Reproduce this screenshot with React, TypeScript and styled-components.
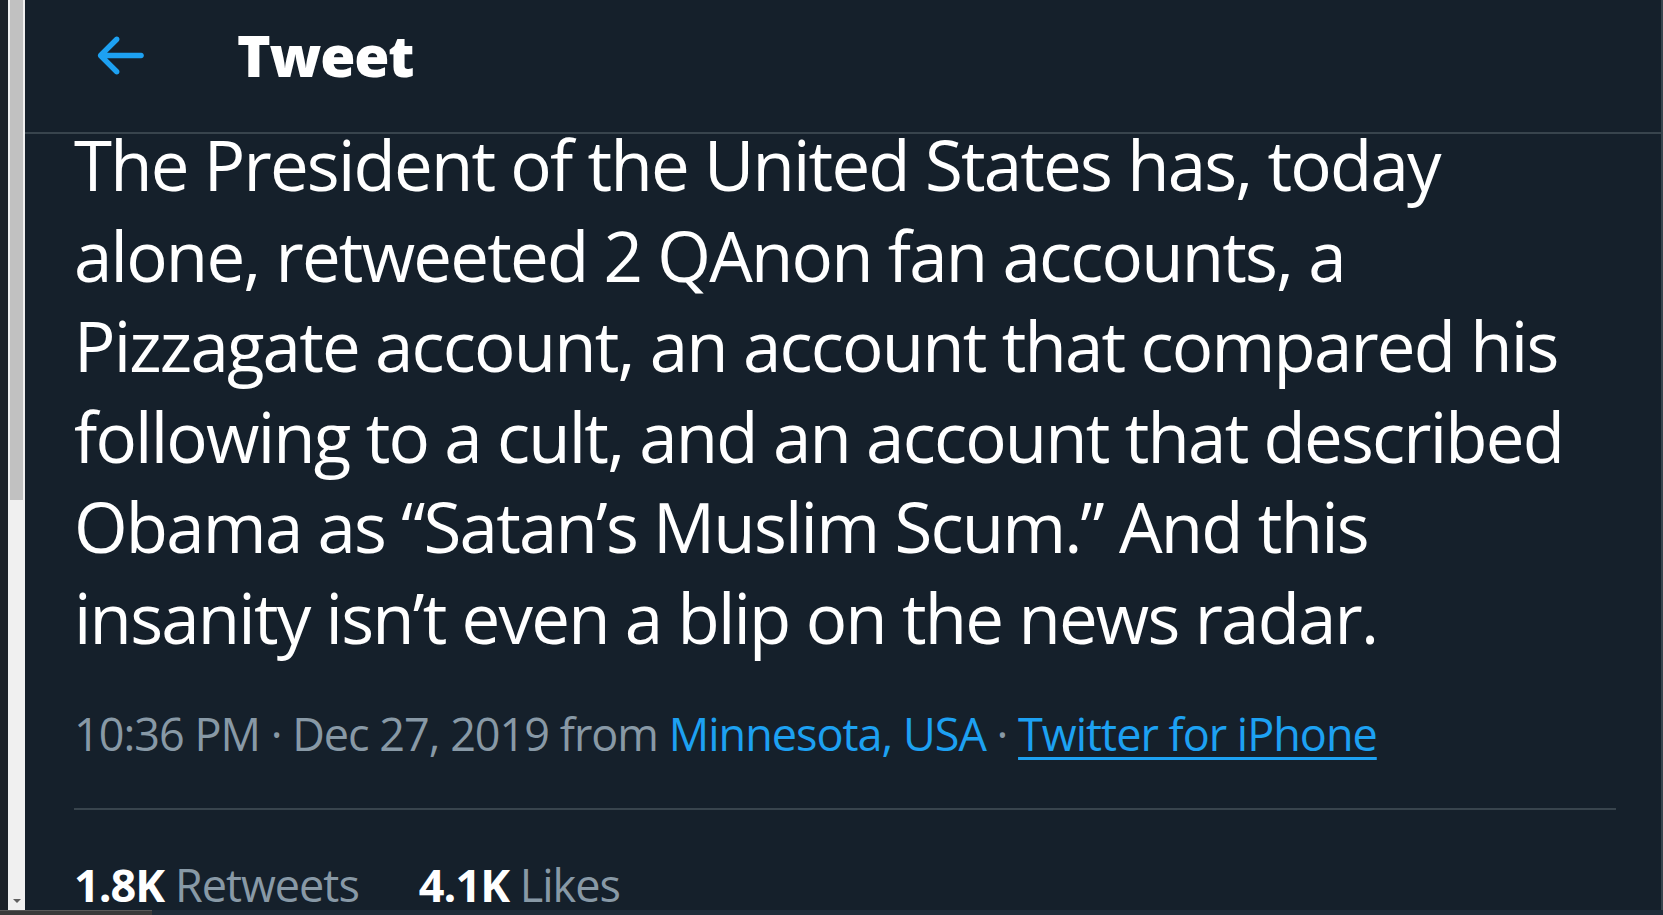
import React from 'react';
import styled, { createGlobalStyle } from 'styled-components';

const GlobalStyle = createGlobalStyle`
  html, body {
    margin: 0;
    height: 100%;
    overflow: hidden;
    background: #15202b;
  }
  #root {
    height: 100%;
  }
`;

const Screen = styled.div`
  display: flex;
  flex-direction: column;
  height: 915px;
  width: 1663px;
`;

const Window = styled.div`
  flex: 1;
  min-height: 0;
  display: flex;
`;

const Edge = styled.div`
  width: 8px;
  background: #1c2128;
`;

const Scrollbar = styled.div`
  width: 17px;
  box-sizing: border-box;
  padding: 0 2px;
  background: #f0f0f0;
  display: flex;
  flex-direction: column;
`;

const Thumb = styled.div`
  height: 500px;
  background: #c1c1c1;
`;

const ArrowSlot = styled.div`
  flex: 1;
  display: flex;
  align-items: flex-end;
  justify-content: center;
  padding-bottom: 7px;
`;

const DownArrow = styled.div`
  width: 0;
  height: 0;
  border-left: 4px solid transparent;
  border-right: 4px solid transparent;
  border-top: 4px solid #606060;
`;

const Column = styled.main`
  flex: 1;
  min-width: 0;
  background: #15202b;
  border-right: 2px solid #38444d;
  overflow: hidden;
  font-family: "Open Sans", "Noto Sans", sans-serif;
`;

const Header = styled.header`
  position: sticky;
  top: 0;
  z-index: 1;
  height: 134px;
  box-sizing: border-box;
  padding-bottom: 22px;
  border-bottom: 2px solid #38444d;
  background: #15202b;
  display: flex;
  align-items: center;
`;

const BackButton = styled.button`
  border: 0;
  padding: 0;
  margin: 0 85px 0 62px;
  background: none;
  display: flex;
  cursor: pointer;
`;

const Title = styled.h1`
  margin: 0;
  color: #ffffff;
  font-size: 57px;
  font-weight: 800;
  letter-spacing: -1.2px;
  line-height: 1;
`;

const Body = styled.article`
  margin-top: -15px;
  padding: 0 45px 0 49px;
`;

const TweetText = styled.p`
  margin: 0;
  color: #ffffff;
  font-size: 69px;
  line-height: 90.6px;
  letter-spacing: -1.8px;
`;

const Meta = styled.div`
  margin-top: 41px;
  padding-bottom: 44px;
  border-bottom: 2px solid #38444d;
  font-size: 45px;
  line-height: 60px;
  letter-spacing: -1px;
  color: #8899a6;
  white-space: nowrap;
`;

const MetaLink = styled.a<{ $underline?: boolean }>`
  color: #1da1f2;
  text-decoration: ${(p) => (p.$underline ? 'underline' : 'none')};
  text-decoration-thickness: 3px;
  text-underline-offset: 6px;
`;

const Stats = styled.div`
  display: flex;
  gap: 60px;
  padding-top: 45px;
  font-size: 45px;
  line-height: 60px;
  letter-spacing: -1px;
  white-space: nowrap;
`;

const Stat = styled.span`
  color: #8899a6;
`;

const StatValue = styled.strong`
  color: #ffffff;
  font-weight: 700;
`;

const Taskbar = styled.div`
  height: 5px;
  display: flex;
`;

const TaskbarStart = styled.div`
  width: 152px;
  background: #3a3a3a;
  border-top: 1px solid #5a5a5a;
`;

const TaskbarRest = styled.div`
  flex: 1;
  background: #1f2c39;
`;

const BackIcon = () => (
  <svg width="65" height="65" viewBox="0 0 24 24" fill="#1da1f2">
    <path d="M20 11H7.414l4.293-4.293c.39-.39.39-1.023 0-1.414s-1.023-.39-1.414 0l-6 6c-.39.39-.39 1.023 0 1.414l6 6c.195.195.45.293.707.293s.512-.098.707-.293c.39-.39.39-1.023 0-1.414L7.414 13H20c.553 0 1-.447 1-1s-.447-1-1-1z" />
  </svg>
);

export default function App() {
  return (
    <Screen>
      <GlobalStyle />
      <Window>
        <Edge />
        <Scrollbar>
          <Thumb />
          <ArrowSlot>
            <DownArrow />
          </ArrowSlot>
        </Scrollbar>
        <Column>
          <Header>
            <BackButton aria-label="Back">
              <BackIcon />
            </BackButton>
            <Title>Tweet</Title>
          </Header>
          <Body>
            <TweetText>
              The President of the United States has, today alone, retweeted 2 QAnon fan accounts, a
              Pizzagate account, an account that compared his following to a cult, and an account that
              described Obama as “Satan’s Muslim Scum.” And this insanity isn’t even a blip on the news radar.
            </TweetText>
            <Meta>
              10:36 PM · Dec 27, 2019 from <MetaLink href="#">Minnesota, USA</MetaLink> ·{' '}
              <MetaLink href="#" $underline>Twitter for iPhone</MetaLink>
            </Meta>
            <Stats>
              <Stat><StatValue>1.8K</StatValue> Retweets</Stat>
              <Stat><StatValue>4.1K</StatValue> Likes</Stat>
            </Stats>
          </Body>
        </Column>
      </Window>
      <Taskbar>
        <TaskbarStart />
        <TaskbarRest />
      </Taskbar>
    </Screen>
  );
}
